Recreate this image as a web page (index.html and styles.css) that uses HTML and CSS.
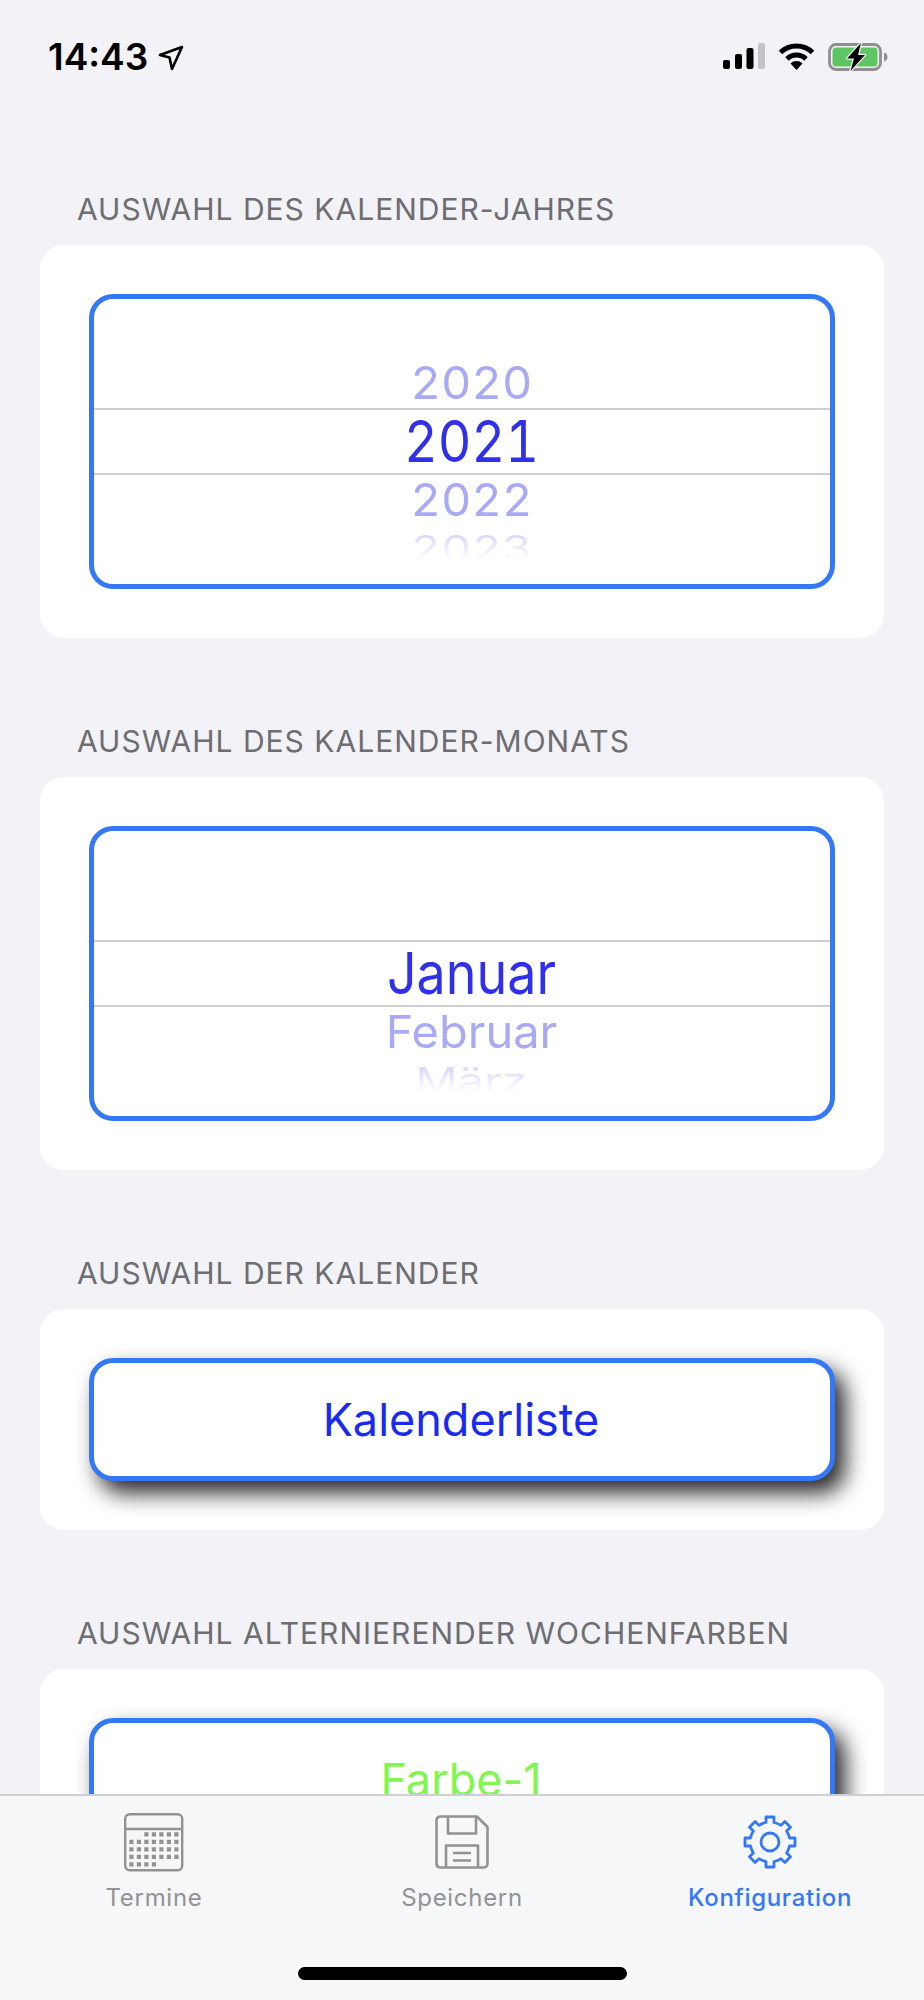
FILE: index.html
```html
<!DOCTYPE html>
<html lang="de">
<head>
<meta charset="utf-8">
<title>Konfiguration</title>
<link rel="stylesheet" href="styles.css">
</head>
<body>
<div class="app">
  <header class="status">
    <div class="status-left">
      <span class="time">14:43</span>
      <svg class="loc" width="26" height="26" viewBox="0 0 26 26"><path d="M2 10 L24 2 L14 24 L11.5 12.5 Z" fill="none" stroke="#000" stroke-width="2.6" stroke-linejoin="round"/></svg>
    </div>
    <div class="status-right">
      <svg width="42" height="26" viewBox="0 0 42 26"><rect x="0" y="17" width="7" height="9" rx="2"/><rect x="12" y="11" width="7" height="15" rx="2"/><rect x="23.500" y="5" width="7" height="21" rx="2"/><rect x="35" y="0" width="7" height="26" rx="2" fill="#c4c4c8"/></svg>
      <svg width="37" height="27" viewBox="0 0 37 27"><path d="M2.500 9.500 A23 23 0 0 1 34.500 9.500 M9 16 A13.500 13.500 0 0 1 28 16" fill="none" stroke="#000" stroke-width="5"/><path d="M12.500 20.500 A8.500 8.500 0 0 1 24.500 20.500 L18.500 27 Z"/></svg>
      <svg class="batt" width="60" height="28" viewBox="0 0 60 28"><rect x="1.500" y="1.500" width="51" height="25" rx="6.500" fill="none" stroke="#8e8e93" stroke-width="2.800"/><rect x="4.500" y="4.500" width="45" height="19" rx="3.500" fill="#5fc563"/><path d="M56 9.500 c2.500 .5 3.500 2.500 3.500 4.500 s-1 4-3.500 4.500 Z" fill="#8e8e93"/><path d="M33 0 L19 15.500 H26 L22.500 28 L37 12 H30 Z" fill="#000" stroke="#f2f2f7" stroke-width="2.500" stroke-linejoin="round" paint-order="stroke"/></svg>
    </div>
  </header>

  <main class="content">
    <section class="group">
      <h2 class="group-title">AUSWAHL DES KALENDER-JAHRES</h2>
      <div class="card">
        <div class="picker">
          <div class="row row-above"><span class="wheel wheel-near">2020</span></div>
          <div class="row row-current"><span class="wheel wheel-current">2021</span></div>
          <div class="row row-below"><span class="wheel wheel-near">2022</span></div>
          <div class="row row-far"><span class="wheel wheel-far">2023</span></div>
        </div>
      </div>
    </section>

    <section class="group">
      <h2 class="group-title">AUSWAHL DES KALENDER-MONATS</h2>
      <div class="card">
        <div class="picker">
          <div class="row row-above"></div>
          <div class="row row-current"><span class="wheel wheel-current">Januar</span></div>
          <div class="row row-below"><span class="wheel wheel-near">Februar</span></div>
          <div class="row row-far"><span class="wheel wheel-far">März</span></div>
        </div>
      </div>
    </section>

    <section class="group">
      <h2 class="group-title">AUSWAHL DER KALENDER</h2>
      <div class="card">
        <div class="button button-list">Kalenderliste</div>
      </div>
    </section>

    <section class="group">
      <h2 class="group-title">AUSWAHL ALTERNIERENDER WOCHENFARBEN</h2>
      <div class="card">
        <div class="button button-color">Farbe-1</div>
      </div>
    </section>
  </main>

  <nav class="tabbar">
    <div class="tab">
      <span class="tab-icon">
        <svg width="60" height="59" viewBox="0 0 60 59" fill="none" stroke="#929296"><rect x="1.200" y="1.200" width="57" height="56" rx="4.500" stroke-width="2.400"/><path d="M1 16 H58" stroke-width="2.400"/><g stroke-width="4.200" stroke-dasharray="4.200 3.300"><path d="M20.300 21.400 H57"/><path d="M5.300 28.900 H57"/><path d="M5.300 36.400 H57"/><path d="M5.300 43.900 H57"/><path d="M5.300 51.400 H32"/></g></svg>
      </span>
      <span class="tab-label">Termine</span>
    </div>
    <div class="tab">
      <span class="tab-icon">
        <svg width="54" height="54" viewBox="0 0 54 54" fill="none" stroke="#929296" stroke-width="2.600" stroke-linejoin="round"><path d="M5 1.500 H42 L52.500 12 V48.500 A4 4 0 0 1 48.500 52.500 H5 A4 4 0 0 1 1.500 48.500 V5 A4 4 0 0 1 5 1.500 Z"/><path d="M13 1.500 V18.500 H41 V1.500"/><path d="M11 52.500 V30.500 H43 V52.500"/><path d="M18 38 H36 M18 45.500 H36"/></svg>
      </span>
      <span class="tab-label">Speichern</span>
    </div>
    <div class="tab tab-active">
      <span class="tab-icon">
        <svg width="54" height="54" viewBox="-27 -27 54 54" fill="none" stroke="#3478f6" stroke-width="2.800" stroke-linejoin="round"><path d="M-4 -19.500 V-25 H4 V-19.500 A20 20 0 0 1 10.960 -16.620 L14.850 -20.510 L20.510 -14.850 L16.620 -10.960 A20 20 0 0 1 19.500 -4 H25 V4 H19.500 A20 20 0 0 1 16.620 10.960 L20.510 14.850 L14.850 20.510 L10.960 16.620 A20 20 0 0 1 4 19.500 V25 H-4 V19.500 A20 20 0 0 1 -10.960 16.620 L-14.850 20.510 L-20.510 14.850 L-16.620 10.960 A20 20 0 0 1 -19.500 4 H-25 V-4 H-19.500 A20 20 0 0 1 -16.620 -10.960 L-20.510 -14.850 L-14.850 -20.510 L-10.960 -16.620 A20 20 0 0 1 -4 -19.500 Z"/><circle r="9"/></svg>
      </span>
      <span class="tab-label">Konfiguration</span>
    </div>
    <div class="home-indicator"></div>
  </nav>
</div>
</body>
</html>
```

FILE: styles.css
```css
* { box-sizing: border-box; }

html, body {
  margin: 0;
  padding: 0;
  background: #f2f2f7;
}

body {
  font-family: "Inter", "Liberation Sans", sans-serif;
}

.app {
  width: 924px;
  height: 2000px;
  display: flex;
  flex-direction: column;
  overflow: hidden;
}

.status {
  height: 90px;
  flex: none;
  padding: 43px 36px 0 48px;
  display: flex;
  justify-content: space-between;
  align-items: flex-start;
}

.status-left {
  display: flex;
  align-items: center;
  gap: 10px;
  height: 28px;
}

.time {
  font-size: 37px;
  line-height: 28px;
  font-weight: 600;
  color: #000;
}

.loc {
  margin-top: 2px;
}

.status-right {
  display: flex;
  align-items: flex-start;
  gap: 13px;
}

.content {
  flex: 1;
  min-height: 0;
  overflow: hidden;
  padding: 101px 40px 0;
}

.group {
  margin-bottom: 85px;
}

.group-title {
  margin: 0 0 18px 37px;
  font-size: 30px;
  line-height: 36px;
  font-weight: 400;
  letter-spacing: 1px;
  color: #6d6d72;
  white-space: nowrap;
}

.card {
  background: #fff;
  border-radius: 24px;
  padding: 49px;
}

.picker {
  height: 295px;
  border: 5px solid #3478f6;
  border-radius: 24px;
  padding-top: 58px;
  background: #fff;
  overflow: hidden;
}

.row {
  display: flex;
  justify-content: center;
  align-items: center;
  padding-left: 19px;
}

.row-above { height: 51px; }
.row-below { height: 50px; }
.row-far   { height: 46px; }

.row-current {
  height: 67px;
  border-top: 2px solid #cfcfd2;
  border-bottom: 2px solid #cfcfd2;
}

.wheel {
  display: block;
  font-size: 52px;
  line-height: 50px;
  color: #3030ea;
  white-space: nowrap;
  font-variant-numeric: tabular-nums;
}

.wheel-current {
  transform: scaleY(1.12);
}

.wheel-near {
  color: #a9a9f5;
  font-size: 47px;
  transform: scaleY(.97);
}

.wheel-far {
  font-size: 47px;
  transform: scaleY(.74);
  background: linear-gradient(to bottom, #cfcff9, #ffffff 85%);
  -webkit-background-clip: text;
  background-clip: text;
  color: transparent;
}

.button {
  height: 123px;
  border: 5px solid #3478f6;
  border-radius: 24px;
  background: #fff;
  box-shadow: 10px 12px 22px rgba(0, 0, 0, .85);
  display: flex;
  justify-content: center;
  align-items: center;
  padding-right: 2px;
  padding-bottom: 1px;
  font-size: 45px;
}

.button-list { color: #1a2bf0; }
.button-color { color: #80f74e; }

.tabbar {
  position: relative;
  flex: none;
  height: 206px;
  background: #f6f7f9;
  border-top: 2px solid #cfcfd3;
  display: grid;
  grid-template-columns: repeat(3, 1fr);
  align-items: start;
  padding-top: 16px;
}

.tab {
  display: flex;
  flex-direction: column;
  align-items: center;
  color: #929296;
}

.tab-active {
  color: #3478f6;
}

.tab-icon {
  height: 60px;
  display: flex;
  align-items: center;
  justify-content: center;
}

.tab-label {
  margin-top: 11px;
  font-size: 24px;
  line-height: 30px;
  font-weight: 400;
  letter-spacing: .7px;
}

.tab-active .tab-label {
  font-weight: 500;
}

.home-indicator {
  position: absolute;
  left: 298px;
  bottom: 20px;
  width: 329px;
  height: 13px;
  border-radius: 7px;
  background: #000;
}
```
